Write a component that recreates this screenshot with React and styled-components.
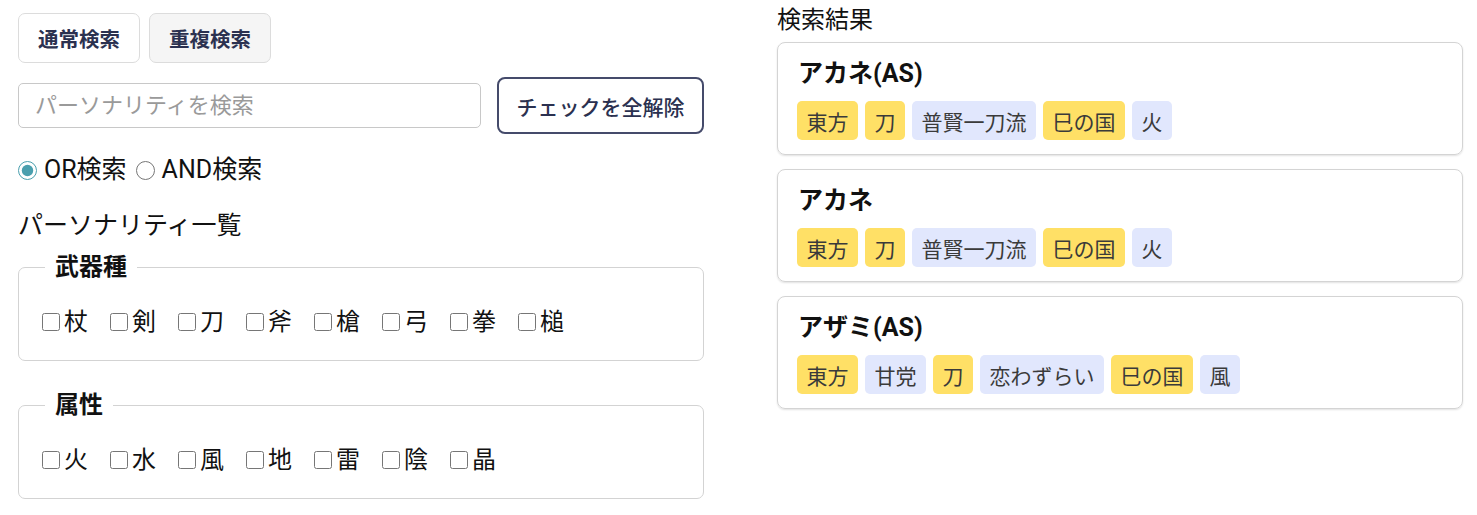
import styled, { createGlobalStyle } from "styled-components";

const GlobalStyle = createGlobalStyle`
  body {
    margin: 0;
    background: #ffffff;
    font-family: Roboto, "Noto Sans CJK JP", sans-serif;
    color: #111;
  }
`;

const Page = styled.div`
  display: grid;
  grid-template-columns: 686px 686px;
  column-gap: 73px;
  padding: 0 14px 0 18px;
  width: 1477px;
  box-sizing: border-box;
`;

const LeftCol = styled.div`
  display: flex;
  flex-direction: column;
  padding-top: 13px;
`;

const ModeRow = styled.div`
  display: flex;
  gap: 9px;
`;

const ModeButton = styled.button`
  width: 122px;
  height: 50px;
  border: 1.5px solid #dcdcdc;
  border-radius: 7px;
  background: ${(p) => (p.$active ? "#ffffff" : "#f5f5f5")};
  font-family: inherit;
  font-size: 20.5px;
  font-weight: 700;
  color: #2b3150;
  padding: 0;
  cursor: pointer;
`;

const SearchRow = styled.div`
  display: flex;
  align-items: center;
  gap: 16px;
  margin-top: 14px;
`;

const SearchInput = styled.input`
  width: 463px;
  height: 45px;
  box-sizing: border-box;
  border: 1.5px solid #c8c8c8;
  border-radius: 5px;
  padding: 0 16px;
  font-family: inherit;
  font-size: 22px;
  &::placeholder {
    color: #9a9a9a;
  }
`;

const ClearButton = styled.button`
  width: 207px;
  height: 57px;
  border: 2px solid #454b6b;
  border-radius: 8px;
  background: #fff;
  font-family: inherit;
  font-size: 21px;
  font-weight: 500;
  color: #2b3150;
  padding: 0;
  cursor: pointer;
`;

const RadioRow = styled.div`
  display: flex;
  align-items: center;
  margin-top: 19px;
  font-size: 25px;
  line-height: 34px;

  label {
    display: flex;
    align-items: center;
    margin-right: 9px;
  }

  input {
    width: 19px;
    height: 19px;
    margin: 0 7px 0 0;
    accent-color: #4a9fae;
  }
`;

const SectionTitle = styled.div`
  font-size: 25px;
  line-height: 34px;
  margin-top: 22px;
`;

const Group = styled.fieldset`
  margin: ${(p) => p.$top}px 0 0 0;
  border: 1.5px solid #d3d3d3;
  border-radius: 7px;
  padding: 21px 22px 21px 23px;

  legend {
    font-size: 24px;
    line-height: 34px;
    font-weight: 700;
    padding: 0 10px;
    margin-left: 3px;
  }
`;

const CheckList = styled.div`
  display: flex;
  gap: 22px;
`;

const CheckItem = styled.label`
  display: flex;
  align-items: center;
  font-size: 24px;
  line-height: 34px;

  input {
    width: 18px;
    height: 18px;
    margin: 0 4px 0 0;
    accent-color: #555;
  }
`;

const RightCol = styled.div`
  display: flex;
  flex-direction: column;
  gap: 14px;
`;

const ResultTitle = styled.div`
  font-size: 24px;
  line-height: 30px;
  margin-top: 5px;
  margin-bottom: -7px;
`;

const Card = styled.div`
  border: 1.5px solid #d4d4d4;
  border-radius: 8px;
  box-shadow: 0 1px 2px rgba(0, 0, 0, 0.12);
  padding: 16px 19px 12px 20px;
  height: 113px;
  box-sizing: border-box;
`;

const CardName = styled.div`
  font-size: 25px;
  font-weight: 700;
  line-height: 30px;
  margin-bottom: 12px;
`;

const Tags = styled.div`
  display: flex;
  gap: 7px;
  margin-left: -1px;
`;

const Tag = styled.span`
  display: inline-flex;
  align-items: center;
  height: 39px;
  padding: 0 9.5px;
  border-radius: 5px;
  font-size: 21px;
  color: #3a3a3a;
  background: ${(p) => (p.$yellow ? "#ffe066" : "#e1e7fd")};
`;

const weapons = ["杖", "剣", "刀", "斧", "槍", "弓", "拳", "槌"];
const elements = ["火", "水", "風", "地", "雷", "陰", "晶"];

const results = [
  {
    name: "アカネ(AS)",
    tags: [["東方", 1], ["刀", 1], ["普賢一刀流", 0], ["巳の国", 1], ["火", 0]],
  },
  {
    name: "アカネ",
    tags: [["東方", 1], ["刀", 1], ["普賢一刀流", 0], ["巳の国", 1], ["火", 0]],
  },
  {
    name: "アザミ(AS)",
    tags: [
      ["東方", 1],
      ["甘党", 0],
      ["刀", 1],
      ["恋わずらい", 0],
      ["巳の国", 1],
      ["風", 0],
    ],
  },
];

export default function App() {
  return (
    <>
      <GlobalStyle />
      <Page>
        <LeftCol>
          <ModeRow>
            <ModeButton $active>通常検索</ModeButton>
            <ModeButton>重複検索</ModeButton>
          </ModeRow>
          <SearchRow>
            <SearchInput placeholder="パーソナリティを検索" />
            <ClearButton>チェックを全解除</ClearButton>
          </SearchRow>
          <RadioRow>
            <label>
              <input type="radio" name="mode" defaultChecked />
              OR検索
            </label>
            <label>
              <input type="radio" name="mode" />
              AND検索
            </label>
          </RadioRow>
          <SectionTitle>パーソナリティ一覧</SectionTitle>
          <Group $top={7}>
            <legend>武器種</legend>
            <CheckList>
              {weapons.map((w) => (
                <CheckItem key={w}>
                  <input type="checkbox" />
                  {w}
                </CheckItem>
              ))}
            </CheckList>
          </Group>
          <Group $top={27}>
            <legend>属性</legend>
            <CheckList>
              {elements.map((w) => (
                <CheckItem key={w}>
                  <input type="checkbox" />
                  {w}
                </CheckItem>
              ))}
            </CheckList>
          </Group>
        </LeftCol>
        <RightCol>
          <ResultTitle>検索結果</ResultTitle>
          {results.map((r, i) => (
            <Card key={i}>
              <CardName>{r.name}</CardName>
              <Tags>
                {r.tags.map(([t, y], j) => (
                  <Tag key={j} $yellow={y === 1}>
                    {t}
                  </Tag>
                ))}
              </Tags>
            </Card>
          ))}
        </RightCol>
      </Page>
    </>
  );
}
